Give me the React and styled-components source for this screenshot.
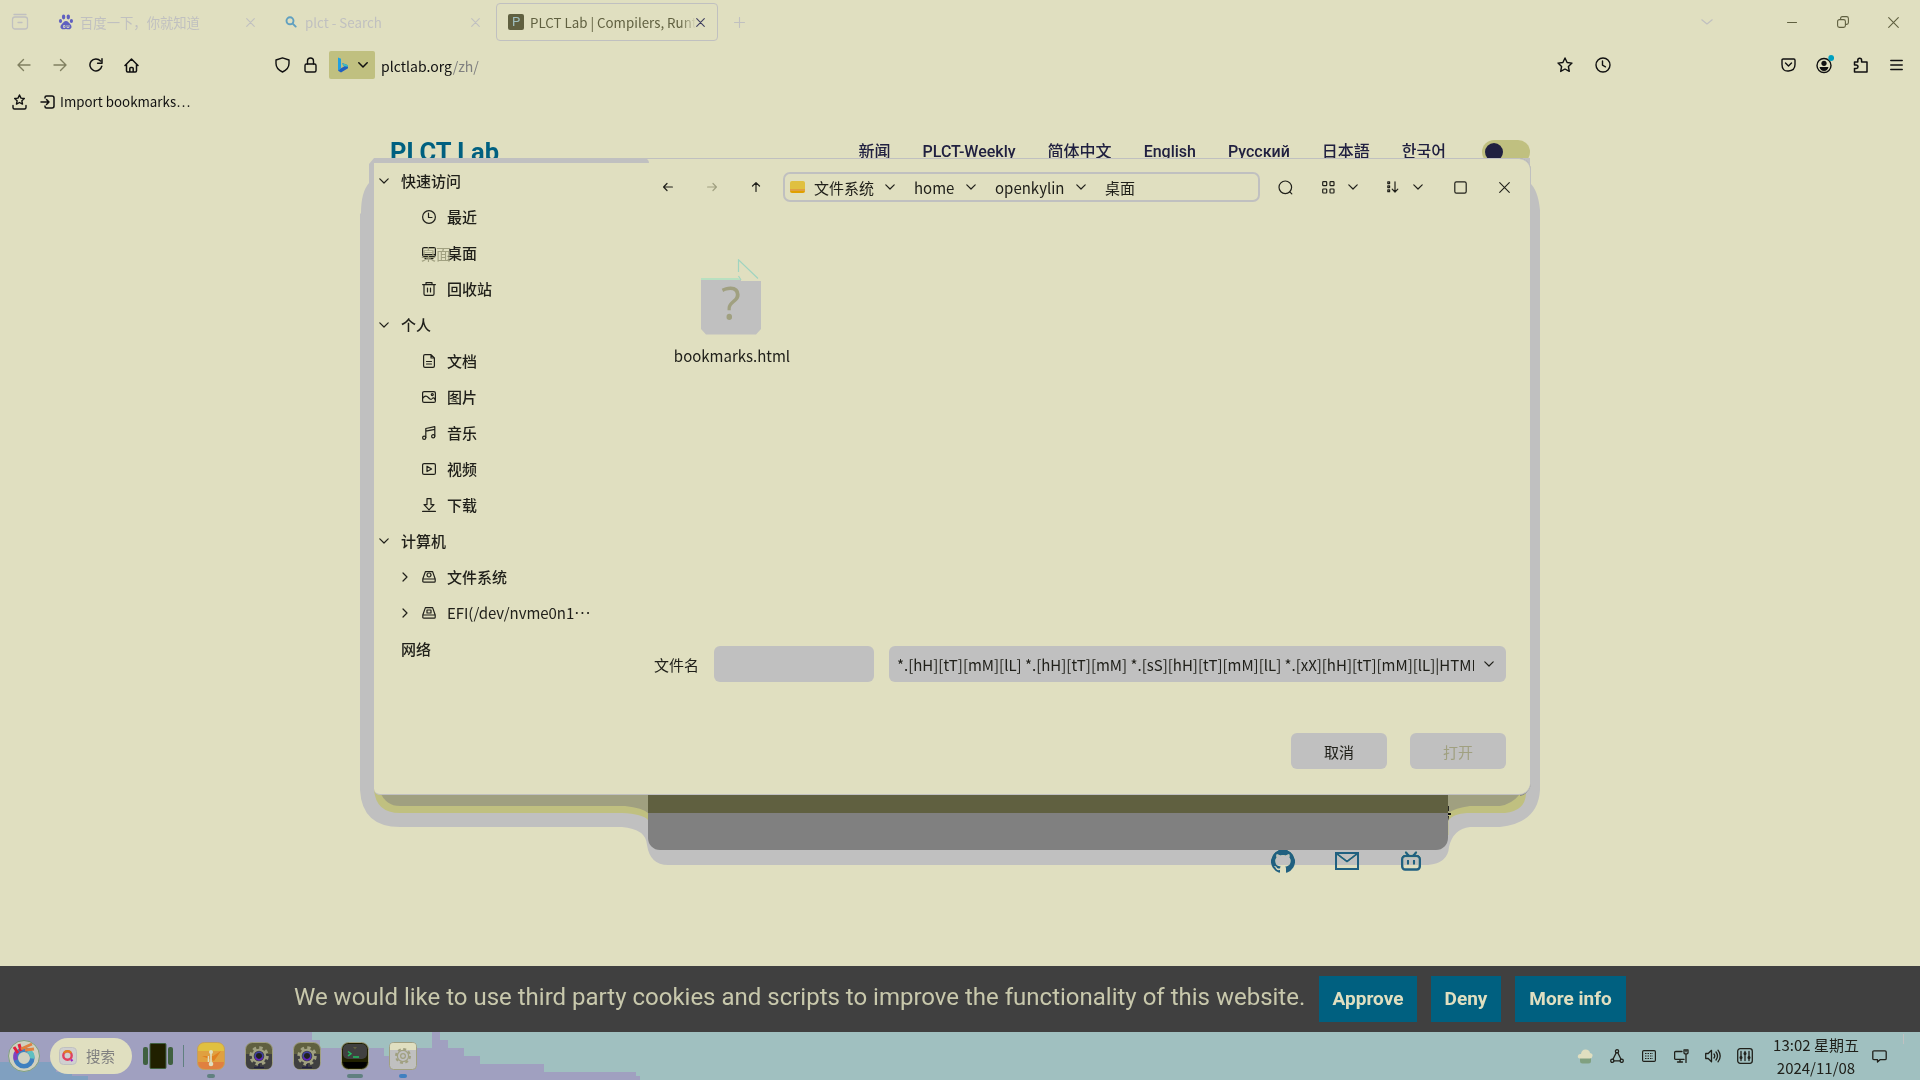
import React from "react";
import styled, { createGlobalStyle, css } from "styled-components";

const c = {
  bg: "#e0dfc0",
  grey: "#c0c0c0",
  olive: "#c0c080",
  khaki: "#a0a080",
  moss: "#606040",
  mid: "#808080",
  ink: "#20201a",
  blue: "#006080",
};
const cjk = `"Noto Sans CJK SC", "Noto Sans", sans-serif`;
const roboto = `Roboto, "Noto Sans CJK SC", "Noto Sans CJK KR", sans-serif`;

const Global = createGlobalStyle`
  *{box-sizing:border-box}
  body{margin:0;background:${c.bg};overflow:hidden}
  button{border:0;padding:0;background:none;font:inherit;color:inherit}
  svg{display:block;flex:none}
`;

const Screen = styled.div`
  position: relative;
  width: 1920px;
  height: 1080px;
  overflow: hidden;
  display: flex;
  flex-direction: column;
  background: ${c.bg};
  color: ${c.ink};
  font: 15px/24px ${cjk};
  white-space: nowrap;
`;

/* Line icon: the children are drawn in a box of $w by $h pixels */
const Svg = styled.svg`
  fill: none;
  stroke: currentColor;
  stroke-width: ${(p) => p.$sw || 1.2};
  stroke-linecap: round;
  stroke-linejoin: round;
`;
const Ico = ({ w = 16, h = w, sw, children }) => (
  <Svg width={w} height={h} viewBox={`0 0 ${w} ${h}`} $sw={sw}>
    {children}
  </Svg>
);

const Slot = styled.button`
  flex: none;
  display: flex;
  align-items: center;
  justify-content: center;
  width: ${(p) => p.$w}px;
  margin-left: ${(p) => p.$ml || 0}px;
  color: ${(p) => p.$c || "inherit"};
`;

/* ---------- browser ---------- */
const TabStrip = styled.div`
  flex: none;
  height: 44px;
  display: flex;
  align-items: center;
  color: ${c.grey};
  font-size: 13.33px;
`;
const Tab = styled.div`
  flex: none;
  width: 222px;
  height: 38px;
  margin-right: 3px;
  padding: 0 9px 0 11px;
  display: flex;
  align-items: center;
  border: 1px solid ${(p) => (p.$on ? c.grey : "transparent")};
  border-radius: 4px;
  color: ${(p) => (p.$on ? c.moss : c.grey)};
`;
const TabTitle = styled.span`
  flex: none;
  width: 166px;
  margin-left: 6px;
  padding-top: 2px;
  overflow: hidden;
  mask-image: linear-gradient(90deg, #000 150px, transparent 166px);
`;
const TabClose = styled.span`
  color: ${(p) => (p.$on ? "#404060" : c.grey)};
`;
const PFav = styled.span`
  width: 16px;
  height: 16px;
  background: ${c.moss};
  border-radius: 2px;
  color: #a0c0c0;
  font: 13px/16px ${roboto};
  text-align: center;
`;
const WinButtons = styled.div`
  margin-left: auto;
  padding-right: 1px;
  display: flex;
  color: ${c.moss};
`;
const ToolBar = styled.div`
  flex: none;
  height: 42px;
  padding: 0 6px;
  display: flex;
  align-items: center;
  color: #101010;
`;
const Engine = styled.button`
  width: 46px;
  height: 28px;
  margin-left: 4px;
  padding: 0 7px 0 8px;
  background: ${c.olive};
  border-radius: 2px;
  display: flex;
  align-items: center;
  justify-content: space-between;
`;
const Url = styled.div`
  flex: 1;
  margin-left: 6px;
  padding-top: 1px;
  color: #101010;
  font-size: 14.05px;
  span {
    color: ${c.mid};
  }
`;
const Bookmarks = styled.div`
  flex: none;
  height: 32px;
  padding-bottom: 1px;
  display: flex;
  align-items: center;
  color: #101010;
  font-size: 13.33px;
`;
const BmLabel = styled.span`
  margin-left: 4px;
`;

/* ---------- web page ---------- */
const SiteHeader = styled.header`
  flex: none;
  height: 40px;
  overflow: hidden;
`;
const SiteBar = styled.div`
  height: 68px;
  padding: 0 390px;
  display: flex;
  align-items: center;
`;
const Brand = styled.h1`
  margin: 0;
  color: ${c.blue};
  font: 700 25.5px/32px ${roboto};
`;
const Nav = styled.nav`
  margin-left: auto;
  display: flex;
  gap: 32px;
  color: #202040;
  font: 500 16px/24px ${roboto};
`;
const Toggle = styled.span`
  width: 48px;
  height: 24px;
  margin-left: 36px;
  padding: 3px;
  border-radius: 12px;
  background: ${c.olive};
  &::before {
    content: "";
    display: block;
    width: 18px;
    height: 18px;
    border-radius: 50%;
    background: #202040;
  }
`;
const SiteBody = styled.main`
  flex: 1;
  display: flex;
  flex-direction: column;
  padding: 643px 0 0;
`;
const Fragment = styled.div`
  width: 1452px;
  height: 24px;
  text-align: right;
  color: #101010;
  font: 700 18px/24px ${cjk};
`;
const Socials = styled.div`
  margin-top: 24px;
  padding-left: 1271px;
  height: 24px;
  display: flex;
  align-items: center;
  gap: 40px;
  color: #206080;
`;

const Cookie = styled.div`
  flex: none;
  height: 66px;
  padding-left: 294px;
  background: #404040;
  display: flex;
  align-items: center;
  font: 24px/32px ${roboto};
  color: #c8c8ac;
`;
const CookieText = styled.span`
  flex: none;
  width: 1025px;
  margin-top: -4px;
`;
const CookieBtn = styled.button`
  flex: none;
  width: ${(p) => p.$w}px;
  height: 46px;
  margin-right: 14px;
  background: ${c.blue};
  color: ${c.bg};
  font: 700 19px/46px ${roboto};
`;

/* ---------- floating windows ---------- */
const Shade = styled.svg`
  position: absolute;
  left: 0;
  top: 0;
  mix-blend-mode: darken;
`;
const BackWindow = styled.div`
  position: absolute;
  left: 648px;
  top: 780px;
  width: 800px;
  height: 70px;
  border-radius: 0 0 12px 12px;
  background: linear-gradient(${c.moss} 33px, ${c.mid} 33px);
`;
const Dialog = styled.section`
  position: absolute;
  left: 374px;
  top: 158px;
  width: 1157px;
  height: 637px;
  display: grid;
  grid-template-columns: 274px 1fr;
  border: solid ${c.grey};
  border-width: 1px 1px 1px 0;
  border-radius: 0 12px 12px 6px;
  background: ${c.bg};
  &::before {
    content: "";
    position: absolute;
    left: 0;
    top: -1px;
    width: 275px;
    height: 5px;
    background: ${c.grey};
    border-radius: 0 5px 0 0;
  }
`;
const Side = styled.aside`
  padding-top: 4px;
`;
const Group = styled.div`
  height: 36px;
  padding-left: 4px;
  display: flex;
  align-items: center;
  font-weight: 500;
`;
const GroupMark = styled.span`
  width: 23px;
  padding-left: 1px;
`;
const Item = styled(Group)`
  padding-left: 28px;
`;
const Twist = styled.span`
  width: 20px;
`;
const ItemIcon = styled.span`
  position: relative;
  width: 25px;
  margin-top: -1px;
`;
const Ghost = styled.span`
  position: absolute;
  left: -1px;
  top: -4px;
  color: ${c.khaki};
  font-weight: 400;
`;
const Narrow = styled.span`
  font-weight: 400;
  letter-spacing: -0.05px;
`;
const Dots = styled.span`
  position: relative;
  top: -5px;
`;

const Main = styled.div`
  display: flex;
  flex-direction: column;
`;
const Head = styled.div`
  flex: none;
  height: 56px;
  display: flex;
  align-items: center;
`;
const PathBox = styled.div`
  width: 477px;
  height: 30px;
  margin-left: 17px;
  padding-left: 5px;
  display: flex;
  align-items: center;
  border: 2px solid ${c.grey};
  border-radius: 7px;
`;
const Folder = styled.span`
  width: 15px;
  height: 12px;
  margin-right: 9px;
  border-radius: 2px;
  background: linear-gradient(#e0c040 65%, #e0a040 65% 80%, #e0a000 80%);
`;
const Crumb = styled.span`
  width: ${(p) => p.$w}px;
  margin-left: ${(p) => p.$ml || 0}px;
  padding-top: 2px;
`;
const Files = styled.div`
  flex: none;
  height: 431px;
  padding: 44px 22px 0 24px;
`;
const File = styled.div`
  width: 120px;
  display: flex;
  flex-direction: column;
  align-items: center;
  gap: 9px;
`;
const FileArt = styled.div`
  width: 60px;
  height: 76px;
  margin-left: -2px;
  display: grid;
`;
const FilePic = styled.svg`
  grid-area: 1 / 1;
`;
const FileMark = styled.span`
  grid-area: 1 / 1;
  padding-top: 20px;
  text-align: center;
  color: ${c.khaki};
  font: 45px/48px "Noto Sans", sans-serif;
`;
const FormRow = styled.div`
  display: flex;
  align-items: center;
  padding: 0 24px 0 6px;
`;
const FieldLabel = styled.label`
  width: 60px;
  padding-top: 2px;
`;
const Field = styled.div`
  width: 160px;
  height: 36px;
  border-radius: 6px;
  background: ${c.grey};
`;
const Combo = styled.div`
  flex: 1;
  height: 36px;
  margin-left: 15px;
  padding: 0 11px 0 8px;
  display: flex;
  align-items: center;
  border-radius: 6px;
  background: ${c.grey};
`;
const ComboText = styled.span`
  width: 577px;
  margin-right: 10px;
  padding-top: 2px;
  overflow: hidden;
`;
const Actions = styled.div`
  margin-top: 51px;
  padding-right: 24px;
  display: flex;
  justify-content: flex-end;
  gap: 23px;
`;
const Action = styled.button`
  width: 96px;
  height: 36px;
  padding-top: 1px;
  border-radius: 6px;
  background: ${c.grey};
  color: ${(p) => (p.$off ? c.khaki : c.ink)};
`;

/* ---------- taskbar ---------- */
const Task = styled.footer`
  flex: none;
  position: relative;
  height: 48px;
  display: flex;
  align-items: center;
  background: #a0c0c0;
  overflow: hidden;
`;
const Wall = styled.svg`
  position: absolute;
  left: 0;
  top: 0;
`;
const Left = styled.div`
  position: relative;
  display: flex;
  align-items: center;
`;
const Start = styled.div`
  margin-left: 8px;
`;
const SearchPill = styled.div`
  width: 82px;
  height: 36px;
  margin-left: 10px;
  padding-left: 9px;
  display: flex;
  align-items: center;
  gap: 9px;
  border-radius: 18px;
  background: ${c.bg};
  color: ${c.mid};
  font-size: 14.5px;
`;
const Sep = styled.span`
  width: 1px;
  height: 22px;
  margin: 0 2px 0 10px;
  background: #608080;
`;
const TaskView = styled.div`
  margin-left: 11px;
`;
const AppSlot = styled.div`
  width: 28px;
  height: 48px;
  margin-left: ${(p) => p.$ml || 20}px;
  padding-top: 10px;
  display: flex;
  flex-direction: column;
  align-items: center;
  ${(p) =>
    p.$dot &&
    css`
      &::after {
        content: "";
        width: ${p.$dot}px;
        height: 4px;
        margin-top: 4px;
        border-radius: 2px;
        background: ${p.$dc || "#608080"};
      }
    `}
`;
const Tray = styled.div`
  margin-left: auto;
  display: flex;
  align-items: center;
  padding-right: 16px;
  height: 48px;
`;
const Clock = styled.div`
  width: 96px;
  margin-left: 7px;
  text-align: center;
  font-size: 15px;
  line-height: 23px;
`;
const Peek = styled.span`
  align-self: flex-start;
  width: 1px;
  height: 10px;
  margin: 2px 0 0 8px;
  background: #c0c0c0;
`;

/* ---------- icons ---------- */
const Down = ({ s = 10, sw = 1.2 }) => (
  <Ico w={s} h={6} sw={sw}>
    <path d={`M.8 .8 L${s / 2} 5 L${s - 0.8} .8`} />
  </Ico>
);
const Cross = ({ s = 10, sw = 1.1 }) => (
  <Ico w={s} sw={sw}>
    <path d={`M.7 .7 L${s - 0.7} ${s - 0.7} M${s - 0.7} .7 L.7 ${s - 0.7}`} />
  </Ico>
);
const RightTick = () => (
  <Ico w={7} h={10}>
    <path d="M1 1l4 4-4 4" />
  </Ico>
);

const sideIcons = {
  recent: <><circle cx="7" cy="7" r="6.4" /><path d="M6.5 3v4.5H10" /></>,
  desk: <><rect x=".6" y="1.6" width="12.8" height="8.9" rx="1.5" /><path d="M3 12.6h8M.6 8.6h12.8" /></>,
  trash: <><path d="M.6 2.6h12.8M4 2.4V.6h6v1.8M2 2.8v9.2q0 1.4 1.4 1.4h7.2q1.4 0 1.4-1.4V2.8M5.5 6v4M8.5 6v4" /></>,
  doc: <><path d="M9 .6H3Q1.6.6 1.6 2v10q0 1.4 1.4 1.4h8q1.4 0 1.4-1.4V4zM9 .6V4h3.4M4.5 7.5h5M4.5 10h5" /></>,
  pic: <><rect x=".6" y="1.6" width="12.8" height="10.8" rx="1.5" /><path d="M.8 8q3-3.5 5.5-.5t4 1 3 1.5" /><circle cx="10.3" cy="4.6" r="1" /></>,
  music: <><circle cx="2.2" cy="11.7" r="1.6" /><circle cx="11.2" cy="10.2" r="1.6" /><path d="M3.8 11.5V2.5L12.8.7v9.5M3.8 5.2l9-1.8" /></>,
  video: <><rect x=".6" y="1.6" width="12.8" height="10.8" rx="1.5" /><path d="M5 4.2v5.4L9.6 7z" /></>,
  down: <><path d="M.6 13.4h12.8M5 .6h4v6h3L7 11.8 2 6.6h3z" /></>,
  disk: <><path d="M3.4 1.6h7.2L13.2 9v2.2q0 1-1 1H1.8q-1 0-1-1V9zM1 9h12" /><circle cx="7" cy="5" r="2" /></>,
  efi: <><path d="M3.4 1.6h7.2L13.2 9v2.2q0 1-1 1H1.8q-1 0-1-1V9zM1 9h12" /><rect x="5" y="4" width="4" height="3" /></>,
};

const tree = [
  { g: "快速访问", items: [["recent", "最近"], ["desk", "桌面"], ["trash", "回收站"]] },
  { g: "个人", items: [["doc", "文档"], ["pic", "图片"], ["music", "音乐"], ["video", "视频"], ["down", "下载"]] },
  { g: "计算机", items: [["disk", "文件系统", 1], ["efi", "EFI(/dev/nvme0n1", 1, true]] },
  { g: "网络", leaf: true, items: [] },
];

const GearApp = () => (
  <svg width="28" height="28" viewBox="0 0 28 28">
    <rect x=".5" y=".5" width="27" height="27" rx="7" fill="#606040" stroke="#a0a080" />
    <path d="M1 12h26v9q0 6-6 6H7q-6 0-6-6z" fill="#404040" />
    <circle cx="14" cy="14" r="8" fill="none" stroke="#a0a080" strokeWidth="3.4" strokeDasharray="3.3 2.98" />
    <circle cx="14" cy="14" r="6.3" fill="#404040" stroke="#a0a080" strokeWidth="2" />
    <circle cx="14" cy="14" r="3.8" fill="#202020" stroke="#4040a0" strokeWidth="1.6" />
    <path d="M10.5 15.5a3.8 3.8 0 0 0 7 0" fill="none" stroke="#6020c0" strokeWidth="1.6" />
    <path d="M14 22v3M9 25.5h10" stroke="#202040" strokeWidth="1.5" />
  </svg>
);

export default function App() {
  return (
    <Screen>
      <Global />
      <TabStrip>
        <Slot $w={18} $ml={11}>
          <Ico w={18} sw={1.3}><path d="M3 1.5h12" /><rect x="1.5" y="4" width="15" height="12" rx="2.5" /><path d="M7 9.5h4" /></Ico>
        </Slot>
        <Slot $w={17} />
        <Tab>
          <svg width="16" height="16" viewBox="0 0 16 16" fill="#6060c0">
            <ellipse cx="5.6" cy="3" rx="1.7" ry="2.4" /><ellipse cx="10.3" cy="3" rx="1.7" ry="2.4" />
            <ellipse cx="2.5" cy="7" rx="1.6" ry="2.1" /><ellipse cx="13.4" cy="7" rx="1.6" ry="2.1" />
            <path d="M8 7c2 0 3 2 4.500 3.500 2 2.200.8 4.800-1.500 4.800-1.200 0-2-.4-3-.4s-1.800.4-3 .4c-2.300 0-3.500-2.600-1.500-4.800C5 9 6 7 8 7z" />
            <path d="M5.500 11.500h1.500v2H5.500zM9 11v2.500h2V11" fill="none" stroke="#e0dfc0" strokeWidth=".8" />
          </svg>
          <TabTitle>百度一下，你就知道</TabTitle>
          <TabClose><Cross s={9} /></TabClose>
        </Tab>
        <Tab>
          <Slot $w={16} $c="#60a0c0"><Ico w={12} sw={1.9}><circle cx="5" cy="4.800" r="3.500" /><path d="M7.700 7.600l3 3" /></Ico></Slot>
          <TabTitle>plct - Search</TabTitle>
          <TabClose><Cross s={9} /></TabClose>
        </Tab>
        <Tab $on>
          <PFav>P</PFav>
          <TabTitle>PLCT Lab | Compilers, Runtimes</TabTitle>
          <TabClose $on><Cross s={9} /></TabClose>
        </Tab>
        <Slot $w={14} $ml={11}><Ico w={11} sw={1.1}><path d="M5.500 .5v10M.5 5.500h10" /></Ico></Slot>
        <WinButtons>
          <Slot $w={34} $c={c.grey}><Down s={12} /></Slot>
          <Slot $w={51} $ml={42}><Ico w={10} sw={1.1}><path d="M.5 5.500h9" /></Ico></Slot>
          <Slot $w={51}><Ico w={12} sw={1.1}><rect x=".6" y="3.600" width="7.800" height="7.800" rx="1.800" /><path d="M3.600 3.300V2.400Q3.600.6 5.400.6h4.200q1.800 0 1.800 1.800v4.200q0 1.800-1.800 1.800h-.9" /></Ico></Slot>
          <Slot $w={51}><Cross s={11} /></Slot>
        </WinButtons>
      </TabStrip>

      <ToolBar>
        <Slot $w={36} $c="#808060"><Ico w={14} sw={1.4}><path d="M13 7H1.500M6.500 1.500L1 7l5.500 5.500" /></Ico></Slot>
        <Slot $w={36} $c="#808060"><Ico w={14} sw={1.4}><path d="M1 7h11.500M7.500 1.500L13 7l-5.500 5.500" /></Ico></Slot>
        <Slot $w={36}><Ico w={14} sw={1.5}><path d="M12.800 8.200A6 6 0 1 1 11.500 3M13 .8v4.400H8.600" /></Ico></Slot>
        <Slot $w={34}><Ico w={15} sw={1.5}><path d="M1 7.500L7.500 1 14 7.500M2.500 6.500v6.300q0 1.200 1.200 1.200h7.600q1.200 0 1.200-1.200V6.500M5.800 14v-3.500q0-1 1-1h1.400q1 0 1 1V14" /></Ico></Slot>
        <Slot $w={28} $ml={120}><Ico w={15} h={16} sw={1.400}><path d="M7.500 .9L1 3v3.500q0 5.500 6.500 8.500Q14 12 14 6.500V3z" /></Ico></Slot>
        <Slot $w={28}><Ico w={13} h={16} sw={1.400}><rect x="1" y="7" width="11" height="8" rx="1.500" /><path d="M3.500 7V4a3 3 0 0 1 6 0v3" /></Ico></Slot>
        <Slot $w={1} />
        <Engine>
          <svg width="12" height="16" viewBox="0 0 12 16"><path d="M1 .5l3 1.200v9.600L1 14z" fill="#20a0e0" /><path d="M4 11.300L7.500 9.300 6.200 8.600 5.200 6l5.800 2.200v3L4 15.500 1 13.700z" fill="#2060c0" /><path d="M5.200 6l5.800 2.200v1.600L7.500 9.300 6.200 8.600z" fill="#40c0c0" /></svg>
          <Down s={10} sw={1.5} />
        </Engine>
        <Url>plctlab.org<span>/zh/</span></Url>
        <Slot $w={38}><Ico w={16} sw={1.4}><path d="M8 1l2.100 4.500 4.900.6-3.600 3.400.9 4.900L8 12l-4.300 2.400.9-4.900L1 6.100l4.900-.6z" /></Ico></Slot>
        <Slot $w={38}><Ico w={16} sw={1.400}><circle cx="8" cy="8" r="7" /><path d="M7.500 4v4.200l3 1.600" /></Ico></Slot>
        <Slot $w={36} $ml={148}><Ico w={15} h={14} sw={1.400}><path d="M2.200 1h10.600q1.200 0 1.200 1.200V6.500q0 6-6.500 6.500T1 6.500V2.200Q1 1 2.200 1zM4.500 5l3 3 3-3" /></Ico></Slot>
        <Slot $w={36}>
          <Ico w={20} h={20} sw={1.400}><circle cx="10" cy="10.500" r="7" /><g fill="currentColor" stroke="none"><circle cx="10" cy="8.300" r="2.600" /><path d="M5.500 12h9q-1 4-4.500 4t-4.500-4z" /></g><circle cx="17.200" cy="3" r="2.900" fill="#00a0c0" stroke="none" /></Ico>
        </Slot>
        <Slot $w={36}><Ico w={15} h={16} sw={1.500}><path d="M1.500 5h3.300V3.200a1.900 1.900 0 0 1 3.800 0V5H14v10H1.500v-3.500h1.800a1.700 1.700 0 0 0 0-3.400H1.500z" /></Ico></Slot>
        <Slot $w={36}><Ico w={13} h={12} sw={1.500}><path d="M.8 1.500h11.400M.8 6h11.400M.8 10.500h11.400" /></Ico></Slot>
      </ToolBar>

      <Bookmarks>
        <Slot $w={39}><Ico w={15} h={16} sw={1.4}><path d="M7.500 1l1.500 3.100 3.300.4-2.400 2.300.6 3.300-3-1.600-3 1.600.6-3.300-2.400-2.300 3.300-.4zM1 11.500v2q0 1.500 1.500 1.500h10q1.500 0 1.500-1.500v-2" /></Ico></Slot>
        <Slot $w={17}><Ico w={15} h={14} sw={1.500}><path d="M1 7h8M6.500 4.500L9 7 6.500 9.500M5 3V2.500Q5 1 6.500 1h5.500q2 0 2 2v8q0 2-2 2H6.500Q5 13 5 11.500V11" /></Ico></Slot>
        <BmLabel>Import bookmarks…</BmLabel>
      </Bookmarks>

      <SiteHeader>
        <SiteBar>
          <Brand>PLCT Lab</Brand>
          <Nav>
            <span>新闻</span><span>PLCT-Weekly</span><span>简体中文</span><span>English</span>
            <span>Русский</span><span>日本語</span><span>한국어</span>
          </Nav>
          <Toggle />
        </SiteBar>
      </SiteHeader>

      <SiteBody>
        <Fragment>号</Fragment>
        <Socials>
          <svg width="24" height="24" viewBox="0 0 24 24" fill="currentColor"><path d="M12 .3a12 12 0 0 0-3.800 23.400c.6.1.8-.3.8-.6v-2c-3.300.7-4-1.600-4-1.600-.6-1.400-1.400-1.800-1.400-1.800-1-.7.1-.7.1-.7 1.200 0 1.900 1.200 1.900 1.200 1 1.800 2.800 1.300 3.500 1 0-.8.4-1.300.7-1.600-2.700-.3-5.500-1.300-5.500-6 0-1.200.5-2.300 1.300-3.100-.2-.4-.6-1.600 0-3.200 0 0 1-.3 3.400 1.200a11.500 11.500 0 0 1 6 0c2.300-1.500 3.300-1.200 3.300-1.200.6 1.600.2 2.800 0 3.200.9.800 1.300 1.900 1.300 3.200 0 4.600-2.800 5.600-5.500 5.900.5.400.9 1 .9 2.200v3.300c0 .3.100.7.8.6A12 12 0 0 0 12 .3" /></svg>
          <Ico w={24} h={18} sw={2}><rect x="1" y="1" width="22" height="16" strokeLinejoin="miter" /><path d="M1.500 1.500L12 9.500l10.500-8" /></Ico>
          <Slot $w={24}><Ico w={20} h={20} sw={2.400}><rect x="1.200" y="5" width="17.600" height="13.500" rx="3" /><path d="M5 1.500l2.500 3M15 1.500l-2.500 3M7 10v2.500M13 10v2.500" /></Ico></Slot>
        </Socials>
      </SiteBody>

      <Cookie>
        <CookieText>We would like to use third party cookies and scripts to improve the functionality of this website.</CookieText>
        <CookieBtn $w={98}>Approve</CookieBtn>
        <CookieBtn $w={70}>Deny</CookieBtn>
        <CookieBtn $w={111}>More info</CookieBtn>
      </Cookie>

      <Shade width="1920" height="900">
        <path fill={c.grey} d="M379 158H374L369 164V183Q361 192 361 213L360 214V790Q362 827 400 827H622Q646 829 647 845Q650 865 668 865H1428Q1448 863 1449 847Q1453 829 1470 827H1500Q1538 823 1540 790V210Q1538 190 1530 183V158z" />
        <path fill={c.olive} d="M374 790Q376 813 400 813H622Q643 814 648 820V835H1448.500V820Q1453 814 1467 813H1505Q1525 811 1526 794V780H374z" />
        <path fill={c.khaki} d="M380 792Q386 806 400 806H625Q643 808 648 813H1448Q1455 808 1470 806H1500Q1512 804 1520 794V780H380z" />
        <path fill="none" stroke={c.mid} strokeWidth="2" d="M1520 159Q1529 161 1530 170M1530 784Q1528 793 1520 795" />
      </Shade>
      <BackWindow />

      <Dialog>
        <Side>
          {tree.map((t) => (
            <React.Fragment key={t.g}>
              <Group>
                <GroupMark>{!t.leaf && <Down />}</GroupMark>
                {t.g}
              </Group>
              {t.items.map(([icon, label, twist, cut]) => (
                <Item key={label}>
                  <Twist>{twist && <RightTick />}</Twist>
                  <ItemIcon>
                    {icon === "desk" && <Ghost>桌面</Ghost>}
                    <Ico w={14}>{sideIcons[icon]}</Ico>
                  </ItemIcon>
                  {cut ? <Narrow>{label}<Dots>…</Dots></Narrow> : label}
                </Item>
              ))}
            </React.Fragment>
          ))}
        </Side>
        <Main>
          <Head>
            <Slot $w={20} $ml={10}><Ico w={10}><path d="M9.400 5H.8M4 1.500L.6 5 4 8.500" /></Ico></Slot>
            <Slot $w={20} $ml={24} $c={c.khaki}><Ico w={10}><path d="M.6 5h8.600M6 1.500L9.400 5 6 8.500" /></Ico></Slot>
            <Slot $w={20} $ml={24}><Ico w={10}><path d="M5 9.400V.8M1.500 4L5 .6 8.500 4" /></Ico></Slot>
            <PathBox>
              <Folder />
              <Crumb $w={68}>文件系统</Crumb>
              <Slot $w={14} $ml={1}><Down /></Slot>
              <Crumb $w={50} $ml={17}>home</Crumb>
              <Slot $w={14}><Down /></Slot>
              <Crumb $w={79} $ml={17}>openkylin</Crumb>
              <Slot $w={14}><Down /></Slot>
              <Crumb $w={40} $ml={17}>桌面</Crumb>
            </PathBox>
            <Slot $w={20} $ml={15}><Ico w={15}><circle cx="7.300" cy="7.300" r="6.300" /><path d="M11.800 11.800l2 2" /></Ico></Slot>
            <Slot $w={20} $ml={23}><Ico w={13}><rect x=".7" y=".7" width="4" height="4" rx=".8" /><rect x="8" y=".7" width="4" height="4" rx=".8" /><rect x=".7" y="8" width="4" height="4" rx=".8" /><rect x="8" y="8" width="4" height="4" rx=".8" /></Ico></Slot>
            <Slot $w={20} $ml={5}><Down /></Slot>
            <Slot $w={20} $ml={20}><Ico w={12}><rect x=".8" y=".8" width="1.800" height="1.800" /><rect x=".8" y="4.800" width="1.800" height="1.800" /><rect x=".8" y="8.900" width="1.800" height="1.800" /><path d="M8 .8v10M5.200 8.200L8 11l2.800-2.800" /></Ico></Slot>
            <Slot $w={20} $ml={5}><Down /></Slot>
            <Slot $w={20} $ml={22}><Ico w={13}><rect x=".8" y=".8" width="11.400" height="11.400" rx="1.600" /></Ico></Slot>
            <Slot $w={20} $ml={24}><Cross s={11} /></Slot>
          </Head>
          <Files>
            <File>
              <FileArt>
                <FilePic width="60" height="76" viewBox="0 0 60 76">
                  <path fill={c.grey} d="M0 21H40V22H60V70L55 75.500H5L0 70z" />
                  <path fill="#b8e0c0" d="M0 19H37L40 21H0z" />
                  <path fill="none" stroke="#a0d4c0" strokeWidth="1.200" d="M37.500 13V.8L57 19.500M37.500 17L40 21" />
                </FilePic>
                <FileMark>?</FileMark>
              </FileArt>
              <span>bookmarks.html</span>
            </File>
          </Files>
          <FormRow>
            <FieldLabel>文件名</FieldLabel>
            <Field />
            <Combo>
              <ComboText>*.[hH][tT][mM][lL] *.[hH][tT][mM] *.[sS][hH][tT][mM][lL] *.[xX][hH][tT][mM][lL]|HTML Files</ComboText>
              <Down />
            </Combo>
          </FormRow>
          <Actions>
            <Action>取消</Action>
            <Action $off>打开</Action>
          </Actions>
        </Main>
      </Dialog>

      <Task>
        <Wall width="660" height="48">
          <path fill="#a0a0c0" d="M0 0H312V8H320V16H384V24H392V16H432V0H440V8H448V16H464V24H480V32H544V40H636V44H640V48H0z" />
          <path fill="#80a0c0" d="M0 30H56V40H72V44H88V48H0z" />
        </Wall>
        <Left>
          <Start>
            <svg width="32" height="34" viewBox="0 0 32 34" fill="none">
              <circle cx="16" cy="17" r="15.500" fill="#d0d0c0" stroke="#80a080" />
              <circle cx="16" cy="19" r="8.300" stroke="#4080c0" strokeWidth="4.600" />
              <path d="M8 21a8.300 8.300 0 0 1 1-8.500" stroke="#8040c0" strokeWidth="4" />
              <path d="M20 11.500a8.300 8.300 0 0 1 4.300 8" stroke="#60c0c0" strokeWidth="4.600" />
              <path d="M6 8l4 6M11 5l2 7" stroke="#e02040" strokeWidth="3" />
              <path d="M13 10l11-5M17 11l9-1" stroke="#e08040" strokeWidth="3" />
            </svg>
          </Start>
          <SearchPill>
            <svg width="18" height="18" viewBox="0 0 18 18" fill="none">
              <rect x=".5" y=".5" width="17" height="17" rx="4" fill="#d0d0d0" stroke="#c0c0c0" />
              <circle cx="8.500" cy="8.500" r="4.200" stroke="#e04060" strokeWidth="2.400" />
              <path d="M5 6a4.200 4.200 0 0 1 7 0" stroke="#e08020" strokeWidth="2.400" />
              <path d="M12 12.500l1.500 1.500" stroke="#a020c0" strokeWidth="2.200" />
            </svg>
            搜索
          </SearchPill>
          <TaskView>
            <svg width="30" height="26" viewBox="0 0 30 26">
              <rect x="0" y="4" width="5" height="18" rx="2" fill="#406040" />
              <rect x="25" y="4" width="5" height="18" rx="2" fill="#406040" />
              <rect x="7" y=".5" width="16" height="25" rx="1" fill="#202000" stroke="#406040" />
            </svg>
          </TaskView>
          <Sep />
          <AppSlot $ml={11} $dot={8}>
            <svg width="28" height="28" viewBox="0 0 28 28">
              <rect x=".5" y=".5" width="27" height="27" rx="7" fill="#e0a040" stroke="#c0a060" />
              <path d="M1 9V8q0-7 7-7h12q7 0 7 7v1z" fill="#e0c040" />
              <path d="M1 20h26q0 7-7 7H8q-7 0-7-7z" fill="#e08040" />
              <path d="M5 14h11l8-5-7 10z" fill="#e08020" />
              <path d="M14 10v12M11.500 14v6" stroke="#e0dfc0" strokeWidth="1.600" />
              <circle cx="14" cy="10" r="2" fill="#e0dfc0" /><circle cx="14" cy="22" r="2.300" fill="#e0dfc0" />
            </svg>
          </AppSlot>
          <AppSlot><GearApp /></AppSlot>
          <AppSlot><GearApp /></AppSlot>
          <AppSlot $dot={16}>
            <svg width="28" height="28" viewBox="0 0 28 28">
              <rect x=".5" y=".5" width="27" height="27" rx="7" fill="#202000" stroke="#a0a080" />
              <rect x="2" y="2" width="24" height="15" rx="5" fill="#404040" />
              <path d="M2 20h24q-1 6-6 6H8q-5 0-6-6z" fill="#000" />
              <path d="M12 5h4l-2 2.500z" fill="#606040" />
              <path d="M7 9.500l3 2.200-3 2.200M12 15h6" fill="none" stroke="#20c060" strokeWidth="1.400" />
            </svg>
          </AppSlot>
          <AppSlot $dot={8} $dc="#4080c0">
            <svg width="28" height="28" viewBox="0 0 28 28" fill="none" stroke="#a0a080">
              <rect x=".5" y=".5" width="27" height="27" rx="4" fill="#c0c0c0" />
              <path d="M1 8V4q0-3 3-3h20q3 0 3 3v4z" fill="#e0dfc0" stroke="none" />
              <circle cx="14" cy="14" r="7" strokeWidth="2" strokeDasharray="3 2.500" />
              <circle cx="14" cy="14" r="5.600" strokeWidth="1.200" /><circle cx="14" cy="14" r="2.400" strokeWidth="1.200" />
            </svg>
          </AppSlot>
        </Left>
        <Tray>
          <Slot $w={32}><svg width="16" height="15" viewBox="0 0 16 15"><path d="M3 8h11v4q0 2.500-2.500 2.500h-6Q3 14.500 3 12z" fill="#80a080" /><path d="M3 9.500Q0 9 1 6.500 1.500 4.500 4 5q.5-4.500 4.500-4.500T13 4q3 .5 2.500 3T13 9.500z" fill="#e0dfc0" /></svg></Slot>
          <Slot $w={32}><Ico w={14} sw={1.300}><circle cx="7" cy="2.300" r="1.600" /><circle cx="2.300" cy="11.800" r="1.600" /><circle cx="11.700" cy="11.800" r="1.600" /><path d="M6.200 3.800L3 10.300M7.800 3.800L11 10.300M4 11.800h6" /></Ico></Slot>
          <Slot $w={32}><Ico w={14} h={12}><rect x=".6" y=".6" width="12.800" height="10.800" rx="1.200" /><path d="M3 3.500h8M3 8.500h8M3 6h8" strokeWidth="1" strokeDasharray="1.500 1" strokeLinecap="butt" /></Ico></Slot>
          <Slot $w={32}><Ico w={15} h={14} sw={1.300}><path d="M8 2.500H1.800q-1.200 0-1.200 1.200v5.500q0 1.200 1.200 1.200H10M3.500 13h5M6 10.600V13M12 5v8.500M10 .8v3q0 1 1 1h2q1 0 1-1v-3zM12 .8v2" /></Ico></Slot>
          <Slot $w={32}><Ico w={16} h={14} sw={1.300}><path d="M.7 4.500v5h2.500l3.300 3.200V1.300L3.200 4.500zM9 5q1.500 2 0 4M11 3q3 4 0 8M13 1.200q4.400 5.800 0 11.600" /></Ico></Slot>
          <Slot $w={32}><Ico w={16} sw={1.300}><rect x=".7" y=".7" width="14.600" height="14.600" rx="2.500" /><path d="M4 3.500v9M8 3.500v9M12 3.500v9" /><circle cx="4" cy="9.500" r=".9" /><circle cx="8" cy="5.500" r=".9" /><circle cx="12" cy="9.500" r=".9" /></Ico></Slot>
          <Clock>13:02 星期五<br />2024/11/08</Clock>
          <Slot $w={31}><Ico w={15} h={13} sw={1.300}><path d="M2 .8h11q1.200 0 1.200 1.200v6.500q0 1.200-1.200 1.200H8L5.500 12V9.700H2Q.8 9.700.8 8.500V2Q.8.8 2 .8z" /></Ico></Slot>
          <Peek />
        </Tray>
      </Task>
    </Screen>
  );
}
